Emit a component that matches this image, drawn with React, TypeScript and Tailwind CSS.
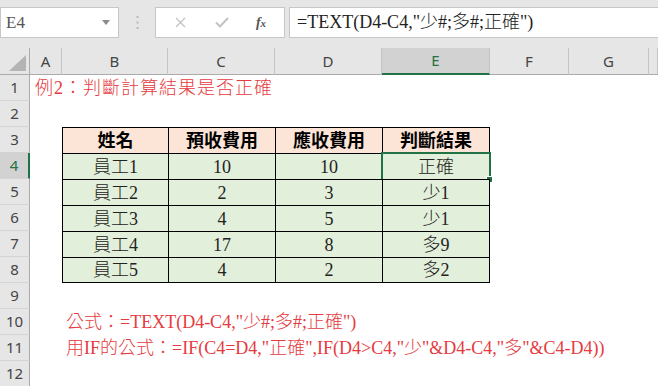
import React from "react";

const serif = { fontFamily: '"Liberation Serif", "Noto Sans CJK TC", serif' };
const sans = { fontFamily: '"Noto Sans", "Open Sans", sans-serif' };

const cols = ["A", "B", "C", "D", "E", "F", "G", ""];

const table: string[][] = [
  ["姓名", "預收費用", "應收費用", "判斷結果"],
  ["員工1", "10", "10", "正確"],
  ["員工2", "2", "3", "少1"],
  ["員工3", "4", "5", "少1"],
  ["員工4", "17", "8", "多9"],
  ["員工5", "4", "2", "多2"],
];

function RowHeader({ n }: { n: number }) {
  const sel = n === 4;
  return (
    <div
      className={
        "flex items-center justify-center border-b border-[#d4d4d4] text-[15px] " +
        (sel
          ? "bg-[#d2d2d2] text-[#217346] border-r-2 border-r-[#217346]"
          : "bg-[#e6e6e6] text-[#444] border-r border-r-[#ababab]")
      }
      style={sans}
    >
      {n}
    </div>
  );
}

function TableCell({ r, c }: { r: number; c: number }) {
  const text = table[r][c];
  const header = r === 0;
  const sel = r === 1 && c === 3;
  return (
    <div
      className={
        "relative flex items-center justify-center border-l border-t border-black text-[18px] leading-none " +
        (header ? "bg-[#fce4d6] font-bold text-black " : "bg-[#e2efda] text-[#222] font-light ") +
        (c === 3 ? "border-r " : "") +
        (r === 5 ? "border-b " : "")
      }
      style={serif}
    >
      {text}
      {sel && (
        <>
          <div className="absolute -left-[2px] -top-[2px] -right-[2px] -bottom-[2px] border-2 border-[#217346]" />
          <div className="absolute -right-[4px] -bottom-[4px] w-[7px] h-[7px] bg-[#217346] border border-white" />
        </>
      )}
    </div>
  );
}

export default function App() {
  const rows = Array.from({ length: 12 }, (_, i) => i + 1);
  return (
    <div className="w-[658px] h-[386px] overflow-hidden bg-white select-none">
      {/* Toolbar */}
      <div className="h-[48px] bg-[#e6e6e6] flex items-start pt-[7px]">
        <div className="w-[119px] h-[31px] bg-white border border-[#c6c6c6] flex items-center justify-between pl-[5px] pr-[8px]">
          <span className="text-[17px] text-[#555]" style={serif}>E4</span>
          <svg width="8" height="5" viewBox="0 0 8 5">
            <path d="M0 0 L8 0 L4 5 Z" fill="#8a8a8a" />
          </svg>
        </div>
        <div className="w-[36px] h-[31px] flex items-center justify-center">
          <svg width="3" height="13" viewBox="0 0 3 13">
            <rect x="0.5" y="0" width="2" height="2" fill="#b9b9b9" />
            <rect x="0.5" y="5.5" width="2" height="2" fill="#b9b9b9" />
            <rect x="0.5" y="11" width="2" height="2" fill="#b9b9b9" />
          </svg>
        </div>
        <div className="w-[130px] h-[31px] bg-white border border-[#c6c6c6] flex items-center">
          <div className="w-[46px] flex justify-center pl-[2px]">
            <svg width="11" height="11" viewBox="0 0 11 11">
              <path d="M1 1 L10 10 M10 1 L1 10" stroke="#c3c3c3" strokeWidth="1.3" />
            </svg>
          </div>
          <div className="w-[40px] flex justify-center">
            <svg width="14" height="11" viewBox="0 0 14 11">
              <path d="M1 5.5 L5 9.5 L13 1" stroke="#c3c3c3" strokeWidth="2" fill="none" />
            </svg>
          </div>
          <div className="flex-1 flex justify-center pr-[4px]">
            <span className="italic font-bold text-[14px] text-[#555]" style={serif}>
              f<span className="text-[11px]">x</span>
            </span>
          </div>
        </div>
        <div className="ml-[4px] flex-1 h-[31px] bg-white border border-[#c6c6c6] border-r-0 flex items-center pl-[7px]">
          <span className="text-[18px] text-[#222] font-light whitespace-nowrap" style={serif}>
            =TEXT(D4-C4,"少#;多#;正確")
          </span>
        </div>
      </div>

      {/* Sheet */}
      <div className="grid grid-cols-[30px_32px_106px_107px_107px_108px_79px_80px_1fr] grid-rows-[27px_repeat(12,26px)]">
        {/* Corner */}
        <div className="bg-[#e6e6e6] border-r border-b border-[#ababab] flex items-end justify-end pr-[3px] pb-[3px]">
          <svg width="17" height="16" viewBox="0 0 17 16">
            <path d="M17 0 L17 16 L0 16 Z" fill="#b4b4b4" />
          </svg>
        </div>
        {cols.map((c) => {
          const sel = c === "E";
          return (
            <div
              key={"h" + c}
              className={
                "flex items-center justify-center text-[15px] border-r border-r-[#c4c4c4] " +
                (sel
                  ? "bg-[#d2d2d2] text-[#217346] border-b-2 border-b-[#217346]"
                  : "bg-[#e6e6e6] text-[#444] border-b border-b-[#ababab]")
              }
              style={sans}
            >
              {c}
            </div>
          );
        })}

        {rows.map((r) => {
          const cells: React.ReactNode[] = [<RowHeader key={"rh" + r} n={r} />];
          for (let ci = 0; ci < 8; ci++) {
            const key = r + "-" + ci;
            if (r >= 3 && r <= 8 && ci >= 1 && ci <= 4) {
              cells.push(<TableCell key={key} r={r - 3} c={ci - 1} />);
            } else if (r === 1 && ci === 0) {
              cells.push(
                <div key={key} className="relative flex items-center pl-[5px] overflow-visible">
                  <span className="whitespace-nowrap text-[18px] font-light tracking-[1px] text-[#e53a40]" style={serif}>
                    例2：判斷計算結果是否正確
                  </span>
                </div>
              );
            } else if (r === 10 && ci === 1) {
              cells.push(
                <div key={key} className="relative flex items-center pl-[4px] overflow-visible">
                  <span className="whitespace-nowrap text-[18px] font-light text-[#e53a40]" style={serif}>
                    公式：=TEXT(D4-C4,"少#;多#;正確")
                  </span>
                </div>
              );
            } else if (r === 11 && ci === 1) {
              cells.push(
                <div key={key} className="relative flex items-center pl-[4px] overflow-visible">
                  <span className="whitespace-nowrap text-[18px] font-light text-[#e53a40]" style={serif}>
                    用IF的公式：=IF(C4=D4,"正確",IF(D4&gt;C4,"少"&amp;D4-C4,"多"&amp;C4-D4))
                  </span>
                </div>
              );
            } else {
              cells.push(<div key={key} />);
            }
          }
          return cells;
        })}
      </div>
    </div>
  );
}
